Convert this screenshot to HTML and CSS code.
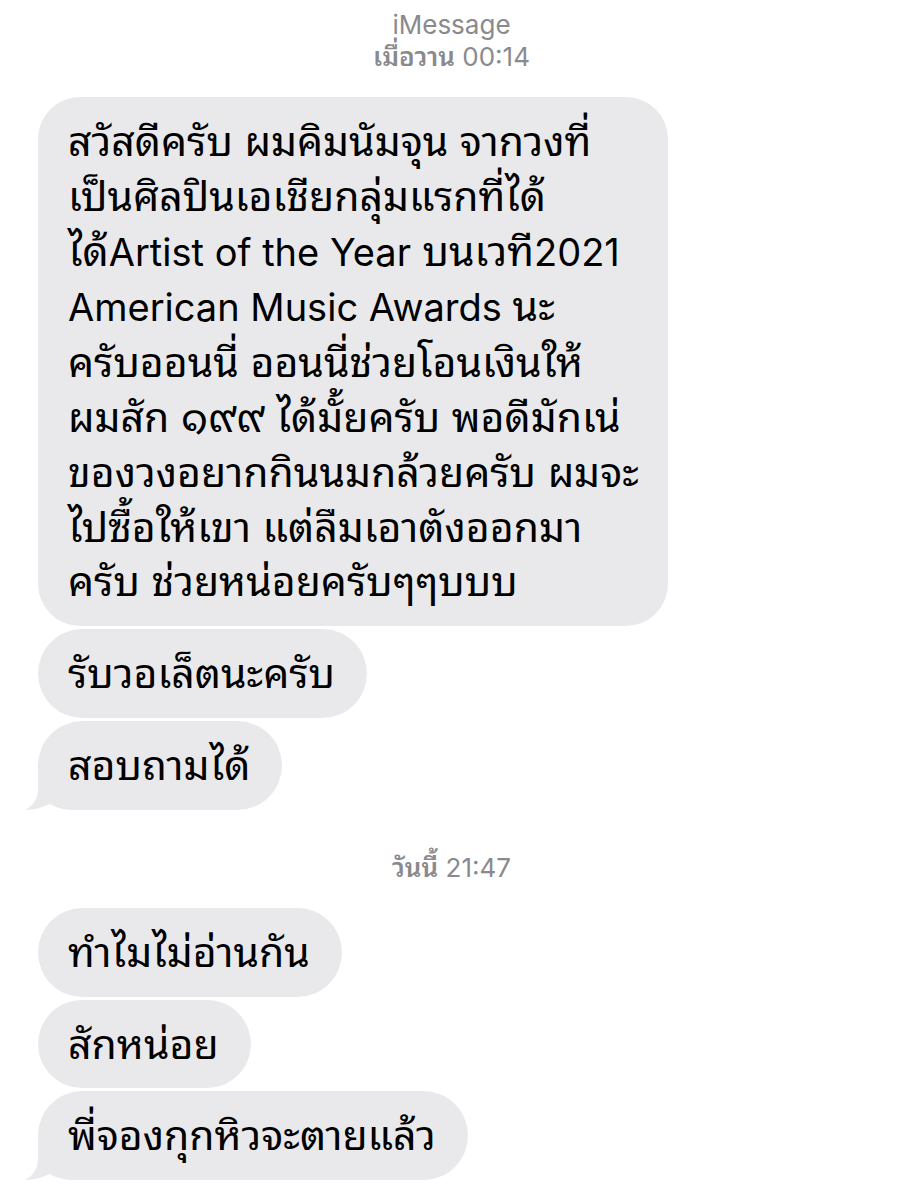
FILE: index.html
```html
<!DOCTYPE html>
<html lang="th">
<head>
<meta charset="utf-8">
<link rel="stylesheet" href="styles.css">
</head>
<body>
<div class="thread">
  <div class="meta">
    <div class="service">iMessage</div>
    <div class="stamp"><span class="day">เมื่อวาน</span> <span class="time">00:14</span></div>
  </div>
  <div class="group">
    <div class="bubble big">สวัสดีครับ ผมคิมนัมจุน จากวงที่<br>เป็นศิลปินเอเชียกลุ่มแรกที่ได้<br>ได้<span class="latin">Artist of the Year</span> บนเวที<span class="latin">2021</span><br><span class="latin">American Music Awards </span>นะ<br>ครับออนนี่ ออนนี่ช่วยโอนเงินให้<br>ผมสัก ๑๙๙ ได้มั้ยครับ พอดีมักเน่<br>ของวงอยากกินนมกล้วยครับ ผมจะ<br>ไปซื้อให้เขา แต่ลืมเอาตังออกมา<br>ครับ ช่วยหน่อยครับๆๆบบบ</div>
    <div class="bubble">รับวอเล็ตนะครับ</div>
    <div class="bubble tail">สอบถามได้<svg class="tailsvg" width="60" height="44" viewBox="0 0 60 44"><path d="M13,0 L13,22 C13,33 8,40 0,44 C9,44 18,41 25,38 C32,42 40,44 50,44 L60,44 L60,0 Z"/></svg></div>
  </div>
  <div class="meta second">
    <div class="stamp"><span class="day">วันนี้</span> <span class="time">21:47</span></div>
  </div>
  <div class="group">
    <div class="bubble">ทำไมไม่อ่านกัน</div>
    <div class="bubble">สักหน่อย</div>
    <div class="bubble tail">พี่จองกุกหิวจะตายแล้ว<svg class="tailsvg" width="60" height="44" viewBox="0 0 60 44"><path d="M13,0 L13,22 C13,33 8,40 0,44 C9,44 18,41 25,38 C32,42 40,44 50,44 L60,44 L60,0 Z"/></svg></div>
  </div>
</div>
</body>
</html>
```

FILE: styles.css
```css
html, body {
  margin: 0;
  padding: 0;
  background: #ffffff;
}
body {
  font-family: Inter, "Noto Sans Thai Looped", "Loma", "Garuda", "Norasi", "Tlwg Typo", "Noto Sans Thai", "Liberation Sans", sans-serif;
}
.thread {
  width: 903px;
  height: 1200px;
  overflow: hidden;
}
.meta {
  text-align: center;
  color: #8a8a8e;
  font-size: 26px;
  line-height: 32px;
  padding-top: 9px;
  padding-bottom: 24px;
}
.meta.second {
  padding-top: 42px;
  padding-bottom: 24px;
}
.day {
  font-weight: 600;
}
.group {
  display: flex;
  flex-direction: column;
  align-items: flex-start;
  gap: 3px;
  padding-left: 38px;
}
.bubble {
  position: relative;
  z-index: 0;
  background: #e9e9eb;
  color: #000;
  font-size: 41px;
  line-height: 54.8px;
  padding: 17px 32px 17px 30px;
  border-radius: 44.5px;
  white-space: nowrap;
}
.bubble .latin {
  font-size: 38px;
}
.bubble.big {
  box-sizing: border-box;
  width: 630px;
  border-radius: 42px;
}
.tailsvg {
  position: absolute;
  z-index: -1;
  left: -13px;
  bottom: 0;
  fill: #e9e9eb;
}
```
